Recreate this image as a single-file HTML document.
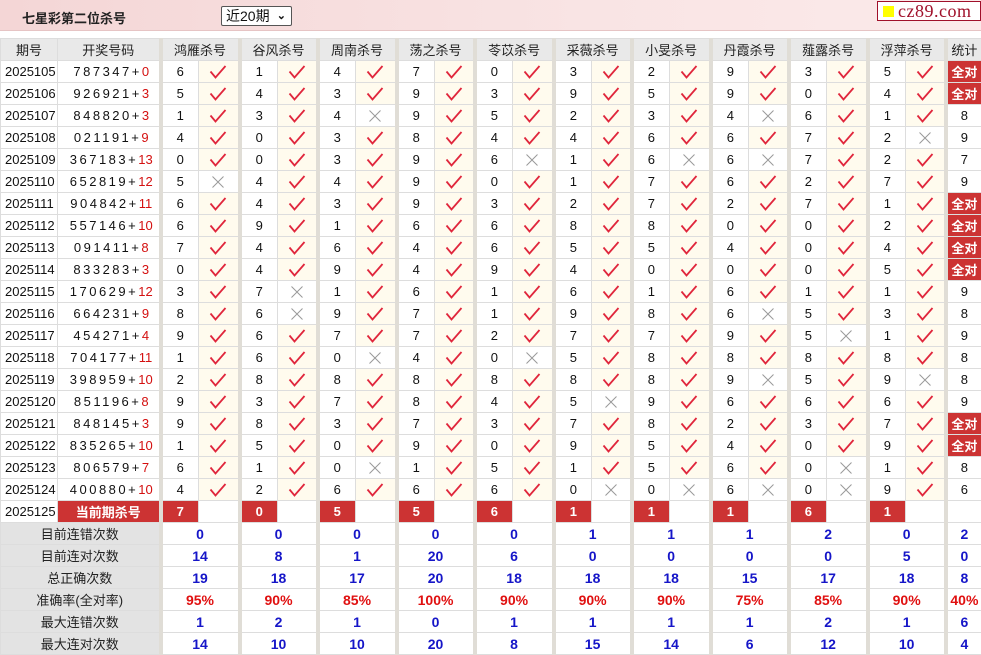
<!DOCTYPE html>
<html><head><meta charset="utf-8"><style>
*{margin:0;padding:0;box-sizing:border-box}
body{width:981px;height:653px;overflow:hidden;background:#fff;font-family:"Liberation Sans","Noto Sans CJK SC",sans-serif;font-size:13px;color:#111;position:relative}
#hd{position:absolute;left:0;top:0;width:981px;height:31px;background:linear-gradient(90deg,#f4d6d6,#f9e4e4 60%,#fbeaea);border-bottom:1px solid #e6c4c4}
#tt{position:absolute;left:22px;top:8px;font-weight:bold;font-size:13px;color:#222}
#sel{position:absolute;left:221px;top:6px;width:71px;height:20px;border:1px solid #555;border-radius:2px;background:#fff;font-size:14px;padding-left:4px;line-height:18px}
#sel b{position:absolute;right:5px;top:0;font-size:11px}
#lg{position:absolute;left:877px;top:1px;width:104px;height:20px;border:1px solid #a0102a;background:#fff;font-family:"Liberation Serif",serif;font-size:18px;color:#a0102a;line-height:18px;padding-left:20px;letter-spacing:0.5px}
#lg i{position:absolute;left:5px;top:4px;width:11px;height:11px;background:#ffff00}
table{position:absolute;left:0;top:38px;border-collapse:collapse;table-layout:fixed;width:981px}
td{border:1px solid #ddd;height:22px;padding:0;text-align:center;white-space:nowrap;overflow:hidden;font-size:13px}
tr.h td{background:#e9e9e9;color:#222}
td.q{text-align:left;padding-left:4px}
td.g{border-left:4px solid #e0ddd6}
td.k{background:#fffbee}
td.w{background:#fff}
td.o{letter-spacing:2.5px;padding-left:6px}
td.o span{color:#d41010;letter-spacing:0}
svg{display:block;margin:0 auto}
td.a{background:#cc3333;color:#fff;font-weight:bold}
td.s{background:#e3e3e3;color:#222}
td.b{color:#1515c8;font-weight:bold;font-size:14px}
td.r{color:#e01010;font-weight:bold;font-size:14px}
</style></head><body>
<svg width="0" height="0" style="position:absolute"><defs>
<symbol id="c" viewBox="0 0 18 14"><path d="M1.5 6.5 L6.5 12.5 L16.5 1" fill="none" stroke="#e0263c" stroke-width="1.8"/></symbol>
<symbol id="x" viewBox="0 0 14 14"><path d="M1.5 1.5 L12.5 12.5 M12.5 1.5 L1.5 12.5" fill="none" stroke="#999" stroke-width="1"/></symbol>
</defs></svg>
<div id="hd"><div id="tt">七星彩第二位杀号</div><div id="sel">近20期<b>&#x2304;</b></div><div id="lg"><i></i>cz89.com</div></div>
<table>
<colgroup><col style="width:57px"><col style="width:103px">
<col style="width:38px"><col style="width:41px"><col style="width:38px"><col style="width:40px"><col style="width:38px"><col style="width:41px"><col style="width:38px"><col style="width:40px"><col style="width:38px"><col style="width:41px"><col style="width:38px"><col style="width:40px"><col style="width:38px"><col style="width:41px"><col style="width:38px"><col style="width:40px"><col style="width:38px"><col style="width:41px"><col style="width:38px"><col style="width:40px">
<col style="width:36px"></colgroup>
<tr class="h"><td>期号</td><td>开奖号码</td><td class="g" colspan="2">鸿雁杀号</td><td class="g" colspan="2">谷风杀号</td><td class="g" colspan="2">周南杀号</td><td class="g" colspan="2">荡之杀号</td><td class="g" colspan="2">苓苡杀号</td><td class="g" colspan="2">采薇杀号</td><td class="g" colspan="2">小旻杀号</td><td class="g" colspan="2">丹霞杀号</td><td class="g" colspan="2">薤露杀号</td><td class="g" colspan="2">浮萍杀号</td><td class="g">统计</td></tr>
<tr><td class="q">2025105</td><td class="o">787347+<span>0</span></td><td class="g">6</td><td class="k"><svg width="18" height="14"><use href="#c"/></svg></td><td class="g">1</td><td class="k"><svg width="18" height="14"><use href="#c"/></svg></td><td class="g">4</td><td class="k"><svg width="18" height="14"><use href="#c"/></svg></td><td class="g">7</td><td class="k"><svg width="18" height="14"><use href="#c"/></svg></td><td class="g">0</td><td class="k"><svg width="18" height="14"><use href="#c"/></svg></td><td class="g">3</td><td class="k"><svg width="18" height="14"><use href="#c"/></svg></td><td class="g">2</td><td class="k"><svg width="18" height="14"><use href="#c"/></svg></td><td class="g">9</td><td class="k"><svg width="18" height="14"><use href="#c"/></svg></td><td class="g">3</td><td class="k"><svg width="18" height="14"><use href="#c"/></svg></td><td class="g">5</td><td class="k"><svg width="18" height="14"><use href="#c"/></svg></td><td class="g a">全对</td></tr>
<tr><td class="q">2025106</td><td class="o">926921+<span>3</span></td><td class="g">5</td><td class="k"><svg width="18" height="14"><use href="#c"/></svg></td><td class="g">4</td><td class="k"><svg width="18" height="14"><use href="#c"/></svg></td><td class="g">3</td><td class="k"><svg width="18" height="14"><use href="#c"/></svg></td><td class="g">9</td><td class="k"><svg width="18" height="14"><use href="#c"/></svg></td><td class="g">3</td><td class="k"><svg width="18" height="14"><use href="#c"/></svg></td><td class="g">9</td><td class="k"><svg width="18" height="14"><use href="#c"/></svg></td><td class="g">5</td><td class="k"><svg width="18" height="14"><use href="#c"/></svg></td><td class="g">9</td><td class="k"><svg width="18" height="14"><use href="#c"/></svg></td><td class="g">0</td><td class="k"><svg width="18" height="14"><use href="#c"/></svg></td><td class="g">4</td><td class="k"><svg width="18" height="14"><use href="#c"/></svg></td><td class="g a">全对</td></tr>
<tr><td class="q">2025107</td><td class="o">848820+<span>3</span></td><td class="g">1</td><td class="k"><svg width="18" height="14"><use href="#c"/></svg></td><td class="g">3</td><td class="k"><svg width="18" height="14"><use href="#c"/></svg></td><td class="g">4</td><td class="w"><svg width="14" height="14"><use href="#x"/></svg></td><td class="g">9</td><td class="k"><svg width="18" height="14"><use href="#c"/></svg></td><td class="g">5</td><td class="k"><svg width="18" height="14"><use href="#c"/></svg></td><td class="g">2</td><td class="k"><svg width="18" height="14"><use href="#c"/></svg></td><td class="g">3</td><td class="k"><svg width="18" height="14"><use href="#c"/></svg></td><td class="g">4</td><td class="w"><svg width="14" height="14"><use href="#x"/></svg></td><td class="g">6</td><td class="k"><svg width="18" height="14"><use href="#c"/></svg></td><td class="g">1</td><td class="k"><svg width="18" height="14"><use href="#c"/></svg></td><td class="g">8</td></tr>
<tr><td class="q">2025108</td><td class="o">021191+<span>9</span></td><td class="g">4</td><td class="k"><svg width="18" height="14"><use href="#c"/></svg></td><td class="g">0</td><td class="k"><svg width="18" height="14"><use href="#c"/></svg></td><td class="g">3</td><td class="k"><svg width="18" height="14"><use href="#c"/></svg></td><td class="g">8</td><td class="k"><svg width="18" height="14"><use href="#c"/></svg></td><td class="g">4</td><td class="k"><svg width="18" height="14"><use href="#c"/></svg></td><td class="g">4</td><td class="k"><svg width="18" height="14"><use href="#c"/></svg></td><td class="g">6</td><td class="k"><svg width="18" height="14"><use href="#c"/></svg></td><td class="g">6</td><td class="k"><svg width="18" height="14"><use href="#c"/></svg></td><td class="g">7</td><td class="k"><svg width="18" height="14"><use href="#c"/></svg></td><td class="g">2</td><td class="w"><svg width="14" height="14"><use href="#x"/></svg></td><td class="g">9</td></tr>
<tr><td class="q">2025109</td><td class="o">367183+<span>13</span></td><td class="g">0</td><td class="k"><svg width="18" height="14"><use href="#c"/></svg></td><td class="g">0</td><td class="k"><svg width="18" height="14"><use href="#c"/></svg></td><td class="g">3</td><td class="k"><svg width="18" height="14"><use href="#c"/></svg></td><td class="g">9</td><td class="k"><svg width="18" height="14"><use href="#c"/></svg></td><td class="g">6</td><td class="w"><svg width="14" height="14"><use href="#x"/></svg></td><td class="g">1</td><td class="k"><svg width="18" height="14"><use href="#c"/></svg></td><td class="g">6</td><td class="w"><svg width="14" height="14"><use href="#x"/></svg></td><td class="g">6</td><td class="w"><svg width="14" height="14"><use href="#x"/></svg></td><td class="g">7</td><td class="k"><svg width="18" height="14"><use href="#c"/></svg></td><td class="g">2</td><td class="k"><svg width="18" height="14"><use href="#c"/></svg></td><td class="g">7</td></tr>
<tr><td class="q">2025110</td><td class="o">652819+<span>12</span></td><td class="g">5</td><td class="w"><svg width="14" height="14"><use href="#x"/></svg></td><td class="g">4</td><td class="k"><svg width="18" height="14"><use href="#c"/></svg></td><td class="g">4</td><td class="k"><svg width="18" height="14"><use href="#c"/></svg></td><td class="g">9</td><td class="k"><svg width="18" height="14"><use href="#c"/></svg></td><td class="g">0</td><td class="k"><svg width="18" height="14"><use href="#c"/></svg></td><td class="g">1</td><td class="k"><svg width="18" height="14"><use href="#c"/></svg></td><td class="g">7</td><td class="k"><svg width="18" height="14"><use href="#c"/></svg></td><td class="g">6</td><td class="k"><svg width="18" height="14"><use href="#c"/></svg></td><td class="g">2</td><td class="k"><svg width="18" height="14"><use href="#c"/></svg></td><td class="g">7</td><td class="k"><svg width="18" height="14"><use href="#c"/></svg></td><td class="g">9</td></tr>
<tr><td class="q">2025111</td><td class="o">904842+<span>11</span></td><td class="g">6</td><td class="k"><svg width="18" height="14"><use href="#c"/></svg></td><td class="g">4</td><td class="k"><svg width="18" height="14"><use href="#c"/></svg></td><td class="g">3</td><td class="k"><svg width="18" height="14"><use href="#c"/></svg></td><td class="g">9</td><td class="k"><svg width="18" height="14"><use href="#c"/></svg></td><td class="g">3</td><td class="k"><svg width="18" height="14"><use href="#c"/></svg></td><td class="g">2</td><td class="k"><svg width="18" height="14"><use href="#c"/></svg></td><td class="g">7</td><td class="k"><svg width="18" height="14"><use href="#c"/></svg></td><td class="g">2</td><td class="k"><svg width="18" height="14"><use href="#c"/></svg></td><td class="g">7</td><td class="k"><svg width="18" height="14"><use href="#c"/></svg></td><td class="g">1</td><td class="k"><svg width="18" height="14"><use href="#c"/></svg></td><td class="g a">全对</td></tr>
<tr><td class="q">2025112</td><td class="o">557146+<span>10</span></td><td class="g">6</td><td class="k"><svg width="18" height="14"><use href="#c"/></svg></td><td class="g">9</td><td class="k"><svg width="18" height="14"><use href="#c"/></svg></td><td class="g">1</td><td class="k"><svg width="18" height="14"><use href="#c"/></svg></td><td class="g">6</td><td class="k"><svg width="18" height="14"><use href="#c"/></svg></td><td class="g">6</td><td class="k"><svg width="18" height="14"><use href="#c"/></svg></td><td class="g">8</td><td class="k"><svg width="18" height="14"><use href="#c"/></svg></td><td class="g">8</td><td class="k"><svg width="18" height="14"><use href="#c"/></svg></td><td class="g">0</td><td class="k"><svg width="18" height="14"><use href="#c"/></svg></td><td class="g">0</td><td class="k"><svg width="18" height="14"><use href="#c"/></svg></td><td class="g">2</td><td class="k"><svg width="18" height="14"><use href="#c"/></svg></td><td class="g a">全对</td></tr>
<tr><td class="q">2025113</td><td class="o">091411+<span>8</span></td><td class="g">7</td><td class="k"><svg width="18" height="14"><use href="#c"/></svg></td><td class="g">4</td><td class="k"><svg width="18" height="14"><use href="#c"/></svg></td><td class="g">6</td><td class="k"><svg width="18" height="14"><use href="#c"/></svg></td><td class="g">4</td><td class="k"><svg width="18" height="14"><use href="#c"/></svg></td><td class="g">6</td><td class="k"><svg width="18" height="14"><use href="#c"/></svg></td><td class="g">5</td><td class="k"><svg width="18" height="14"><use href="#c"/></svg></td><td class="g">5</td><td class="k"><svg width="18" height="14"><use href="#c"/></svg></td><td class="g">4</td><td class="k"><svg width="18" height="14"><use href="#c"/></svg></td><td class="g">0</td><td class="k"><svg width="18" height="14"><use href="#c"/></svg></td><td class="g">4</td><td class="k"><svg width="18" height="14"><use href="#c"/></svg></td><td class="g a">全对</td></tr>
<tr><td class="q">2025114</td><td class="o">833283+<span>3</span></td><td class="g">0</td><td class="k"><svg width="18" height="14"><use href="#c"/></svg></td><td class="g">4</td><td class="k"><svg width="18" height="14"><use href="#c"/></svg></td><td class="g">9</td><td class="k"><svg width="18" height="14"><use href="#c"/></svg></td><td class="g">4</td><td class="k"><svg width="18" height="14"><use href="#c"/></svg></td><td class="g">9</td><td class="k"><svg width="18" height="14"><use href="#c"/></svg></td><td class="g">4</td><td class="k"><svg width="18" height="14"><use href="#c"/></svg></td><td class="g">0</td><td class="k"><svg width="18" height="14"><use href="#c"/></svg></td><td class="g">0</td><td class="k"><svg width="18" height="14"><use href="#c"/></svg></td><td class="g">0</td><td class="k"><svg width="18" height="14"><use href="#c"/></svg></td><td class="g">5</td><td class="k"><svg width="18" height="14"><use href="#c"/></svg></td><td class="g a">全对</td></tr>
<tr><td class="q">2025115</td><td class="o">170629+<span>12</span></td><td class="g">3</td><td class="k"><svg width="18" height="14"><use href="#c"/></svg></td><td class="g">7</td><td class="w"><svg width="14" height="14"><use href="#x"/></svg></td><td class="g">1</td><td class="k"><svg width="18" height="14"><use href="#c"/></svg></td><td class="g">6</td><td class="k"><svg width="18" height="14"><use href="#c"/></svg></td><td class="g">1</td><td class="k"><svg width="18" height="14"><use href="#c"/></svg></td><td class="g">6</td><td class="k"><svg width="18" height="14"><use href="#c"/></svg></td><td class="g">1</td><td class="k"><svg width="18" height="14"><use href="#c"/></svg></td><td class="g">6</td><td class="k"><svg width="18" height="14"><use href="#c"/></svg></td><td class="g">1</td><td class="k"><svg width="18" height="14"><use href="#c"/></svg></td><td class="g">1</td><td class="k"><svg width="18" height="14"><use href="#c"/></svg></td><td class="g">9</td></tr>
<tr><td class="q">2025116</td><td class="o">664231+<span>9</span></td><td class="g">8</td><td class="k"><svg width="18" height="14"><use href="#c"/></svg></td><td class="g">6</td><td class="w"><svg width="14" height="14"><use href="#x"/></svg></td><td class="g">9</td><td class="k"><svg width="18" height="14"><use href="#c"/></svg></td><td class="g">7</td><td class="k"><svg width="18" height="14"><use href="#c"/></svg></td><td class="g">1</td><td class="k"><svg width="18" height="14"><use href="#c"/></svg></td><td class="g">9</td><td class="k"><svg width="18" height="14"><use href="#c"/></svg></td><td class="g">8</td><td class="k"><svg width="18" height="14"><use href="#c"/></svg></td><td class="g">6</td><td class="w"><svg width="14" height="14"><use href="#x"/></svg></td><td class="g">5</td><td class="k"><svg width="18" height="14"><use href="#c"/></svg></td><td class="g">3</td><td class="k"><svg width="18" height="14"><use href="#c"/></svg></td><td class="g">8</td></tr>
<tr><td class="q">2025117</td><td class="o">454271+<span>4</span></td><td class="g">9</td><td class="k"><svg width="18" height="14"><use href="#c"/></svg></td><td class="g">6</td><td class="k"><svg width="18" height="14"><use href="#c"/></svg></td><td class="g">7</td><td class="k"><svg width="18" height="14"><use href="#c"/></svg></td><td class="g">7</td><td class="k"><svg width="18" height="14"><use href="#c"/></svg></td><td class="g">2</td><td class="k"><svg width="18" height="14"><use href="#c"/></svg></td><td class="g">7</td><td class="k"><svg width="18" height="14"><use href="#c"/></svg></td><td class="g">7</td><td class="k"><svg width="18" height="14"><use href="#c"/></svg></td><td class="g">9</td><td class="k"><svg width="18" height="14"><use href="#c"/></svg></td><td class="g">5</td><td class="w"><svg width="14" height="14"><use href="#x"/></svg></td><td class="g">1</td><td class="k"><svg width="18" height="14"><use href="#c"/></svg></td><td class="g">9</td></tr>
<tr><td class="q">2025118</td><td class="o">704177+<span>11</span></td><td class="g">1</td><td class="k"><svg width="18" height="14"><use href="#c"/></svg></td><td class="g">6</td><td class="k"><svg width="18" height="14"><use href="#c"/></svg></td><td class="g">0</td><td class="w"><svg width="14" height="14"><use href="#x"/></svg></td><td class="g">4</td><td class="k"><svg width="18" height="14"><use href="#c"/></svg></td><td class="g">0</td><td class="w"><svg width="14" height="14"><use href="#x"/></svg></td><td class="g">5</td><td class="k"><svg width="18" height="14"><use href="#c"/></svg></td><td class="g">8</td><td class="k"><svg width="18" height="14"><use href="#c"/></svg></td><td class="g">8</td><td class="k"><svg width="18" height="14"><use href="#c"/></svg></td><td class="g">8</td><td class="k"><svg width="18" height="14"><use href="#c"/></svg></td><td class="g">8</td><td class="k"><svg width="18" height="14"><use href="#c"/></svg></td><td class="g">8</td></tr>
<tr><td class="q">2025119</td><td class="o">398959+<span>10</span></td><td class="g">2</td><td class="k"><svg width="18" height="14"><use href="#c"/></svg></td><td class="g">8</td><td class="k"><svg width="18" height="14"><use href="#c"/></svg></td><td class="g">8</td><td class="k"><svg width="18" height="14"><use href="#c"/></svg></td><td class="g">8</td><td class="k"><svg width="18" height="14"><use href="#c"/></svg></td><td class="g">8</td><td class="k"><svg width="18" height="14"><use href="#c"/></svg></td><td class="g">8</td><td class="k"><svg width="18" height="14"><use href="#c"/></svg></td><td class="g">8</td><td class="k"><svg width="18" height="14"><use href="#c"/></svg></td><td class="g">9</td><td class="w"><svg width="14" height="14"><use href="#x"/></svg></td><td class="g">5</td><td class="k"><svg width="18" height="14"><use href="#c"/></svg></td><td class="g">9</td><td class="w"><svg width="14" height="14"><use href="#x"/></svg></td><td class="g">8</td></tr>
<tr><td class="q">2025120</td><td class="o">851196+<span>8</span></td><td class="g">9</td><td class="k"><svg width="18" height="14"><use href="#c"/></svg></td><td class="g">3</td><td class="k"><svg width="18" height="14"><use href="#c"/></svg></td><td class="g">7</td><td class="k"><svg width="18" height="14"><use href="#c"/></svg></td><td class="g">8</td><td class="k"><svg width="18" height="14"><use href="#c"/></svg></td><td class="g">4</td><td class="k"><svg width="18" height="14"><use href="#c"/></svg></td><td class="g">5</td><td class="w"><svg width="14" height="14"><use href="#x"/></svg></td><td class="g">9</td><td class="k"><svg width="18" height="14"><use href="#c"/></svg></td><td class="g">6</td><td class="k"><svg width="18" height="14"><use href="#c"/></svg></td><td class="g">6</td><td class="k"><svg width="18" height="14"><use href="#c"/></svg></td><td class="g">6</td><td class="k"><svg width="18" height="14"><use href="#c"/></svg></td><td class="g">9</td></tr>
<tr><td class="q">2025121</td><td class="o">848145+<span>3</span></td><td class="g">9</td><td class="k"><svg width="18" height="14"><use href="#c"/></svg></td><td class="g">8</td><td class="k"><svg width="18" height="14"><use href="#c"/></svg></td><td class="g">3</td><td class="k"><svg width="18" height="14"><use href="#c"/></svg></td><td class="g">7</td><td class="k"><svg width="18" height="14"><use href="#c"/></svg></td><td class="g">3</td><td class="k"><svg width="18" height="14"><use href="#c"/></svg></td><td class="g">7</td><td class="k"><svg width="18" height="14"><use href="#c"/></svg></td><td class="g">8</td><td class="k"><svg width="18" height="14"><use href="#c"/></svg></td><td class="g">2</td><td class="k"><svg width="18" height="14"><use href="#c"/></svg></td><td class="g">3</td><td class="k"><svg width="18" height="14"><use href="#c"/></svg></td><td class="g">7</td><td class="k"><svg width="18" height="14"><use href="#c"/></svg></td><td class="g a">全对</td></tr>
<tr><td class="q">2025122</td><td class="o">835265+<span>10</span></td><td class="g">1</td><td class="k"><svg width="18" height="14"><use href="#c"/></svg></td><td class="g">5</td><td class="k"><svg width="18" height="14"><use href="#c"/></svg></td><td class="g">0</td><td class="k"><svg width="18" height="14"><use href="#c"/></svg></td><td class="g">9</td><td class="k"><svg width="18" height="14"><use href="#c"/></svg></td><td class="g">0</td><td class="k"><svg width="18" height="14"><use href="#c"/></svg></td><td class="g">9</td><td class="k"><svg width="18" height="14"><use href="#c"/></svg></td><td class="g">5</td><td class="k"><svg width="18" height="14"><use href="#c"/></svg></td><td class="g">4</td><td class="k"><svg width="18" height="14"><use href="#c"/></svg></td><td class="g">0</td><td class="k"><svg width="18" height="14"><use href="#c"/></svg></td><td class="g">9</td><td class="k"><svg width="18" height="14"><use href="#c"/></svg></td><td class="g a">全对</td></tr>
<tr><td class="q">2025123</td><td class="o">806579+<span>7</span></td><td class="g">6</td><td class="k"><svg width="18" height="14"><use href="#c"/></svg></td><td class="g">1</td><td class="k"><svg width="18" height="14"><use href="#c"/></svg></td><td class="g">0</td><td class="w"><svg width="14" height="14"><use href="#x"/></svg></td><td class="g">1</td><td class="k"><svg width="18" height="14"><use href="#c"/></svg></td><td class="g">5</td><td class="k"><svg width="18" height="14"><use href="#c"/></svg></td><td class="g">1</td><td class="k"><svg width="18" height="14"><use href="#c"/></svg></td><td class="g">5</td><td class="k"><svg width="18" height="14"><use href="#c"/></svg></td><td class="g">6</td><td class="k"><svg width="18" height="14"><use href="#c"/></svg></td><td class="g">0</td><td class="w"><svg width="14" height="14"><use href="#x"/></svg></td><td class="g">1</td><td class="k"><svg width="18" height="14"><use href="#c"/></svg></td><td class="g">8</td></tr>
<tr><td class="q">2025124</td><td class="o">400880+<span>10</span></td><td class="g">4</td><td class="k"><svg width="18" height="14"><use href="#c"/></svg></td><td class="g">2</td><td class="k"><svg width="18" height="14"><use href="#c"/></svg></td><td class="g">6</td><td class="k"><svg width="18" height="14"><use href="#c"/></svg></td><td class="g">6</td><td class="k"><svg width="18" height="14"><use href="#c"/></svg></td><td class="g">6</td><td class="k"><svg width="18" height="14"><use href="#c"/></svg></td><td class="g">0</td><td class="w"><svg width="14" height="14"><use href="#x"/></svg></td><td class="g">0</td><td class="w"><svg width="14" height="14"><use href="#x"/></svg></td><td class="g">6</td><td class="w"><svg width="14" height="14"><use href="#x"/></svg></td><td class="g">0</td><td class="w"><svg width="14" height="14"><use href="#x"/></svg></td><td class="g">9</td><td class="k"><svg width="18" height="14"><use href="#c"/></svg></td><td class="g">6</td></tr>
<tr><td class="q">2025125</td><td class="a">当前期杀号</td><td class="g a">7</td><td></td><td class="g a">0</td><td></td><td class="g a">5</td><td></td><td class="g a">5</td><td></td><td class="g a">6</td><td></td><td class="g a">1</td><td></td><td class="g a">1</td><td></td><td class="g a">1</td><td></td><td class="g a">6</td><td></td><td class="g a">1</td><td></td><td class="g"></td></tr>
<tr><td class="s" colspan="2">目前连错次数</td><td class="g b" colspan="2">0</td><td class="g b" colspan="2">0</td><td class="g b" colspan="2">0</td><td class="g b" colspan="2">0</td><td class="g b" colspan="2">0</td><td class="g b" colspan="2">1</td><td class="g b" colspan="2">1</td><td class="g b" colspan="2">1</td><td class="g b" colspan="2">2</td><td class="g b" colspan="2">0</td><td class="g b">2</td></tr>
<tr><td class="s" colspan="2">目前连对次数</td><td class="g b" colspan="2">14</td><td class="g b" colspan="2">8</td><td class="g b" colspan="2">1</td><td class="g b" colspan="2">20</td><td class="g b" colspan="2">6</td><td class="g b" colspan="2">0</td><td class="g b" colspan="2">0</td><td class="g b" colspan="2">0</td><td class="g b" colspan="2">0</td><td class="g b" colspan="2">5</td><td class="g b">0</td></tr>
<tr><td class="s" colspan="2">总正确次数</td><td class="g b" colspan="2">19</td><td class="g b" colspan="2">18</td><td class="g b" colspan="2">17</td><td class="g b" colspan="2">20</td><td class="g b" colspan="2">18</td><td class="g b" colspan="2">18</td><td class="g b" colspan="2">18</td><td class="g b" colspan="2">15</td><td class="g b" colspan="2">17</td><td class="g b" colspan="2">18</td><td class="g b">8</td></tr>
<tr><td class="s" colspan="2">准确率(全对率)</td><td class="g r" colspan="2">95%</td><td class="g r" colspan="2">90%</td><td class="g r" colspan="2">85%</td><td class="g r" colspan="2">100%</td><td class="g r" colspan="2">90%</td><td class="g r" colspan="2">90%</td><td class="g r" colspan="2">90%</td><td class="g r" colspan="2">75%</td><td class="g r" colspan="2">85%</td><td class="g r" colspan="2">90%</td><td class="g r">40%</td></tr>
<tr><td class="s" colspan="2">最大连错次数</td><td class="g b" colspan="2">1</td><td class="g b" colspan="2">2</td><td class="g b" colspan="2">1</td><td class="g b" colspan="2">0</td><td class="g b" colspan="2">1</td><td class="g b" colspan="2">1</td><td class="g b" colspan="2">1</td><td class="g b" colspan="2">1</td><td class="g b" colspan="2">2</td><td class="g b" colspan="2">1</td><td class="g b">6</td></tr>
<tr><td class="s" colspan="2">最大连对次数</td><td class="g b" colspan="2">14</td><td class="g b" colspan="2">10</td><td class="g b" colspan="2">10</td><td class="g b" colspan="2">20</td><td class="g b" colspan="2">8</td><td class="g b" colspan="2">15</td><td class="g b" colspan="2">14</td><td class="g b" colspan="2">6</td><td class="g b" colspan="2">12</td><td class="g b" colspan="2">10</td><td class="g b">4</td></tr>
</table>
</body></html>
